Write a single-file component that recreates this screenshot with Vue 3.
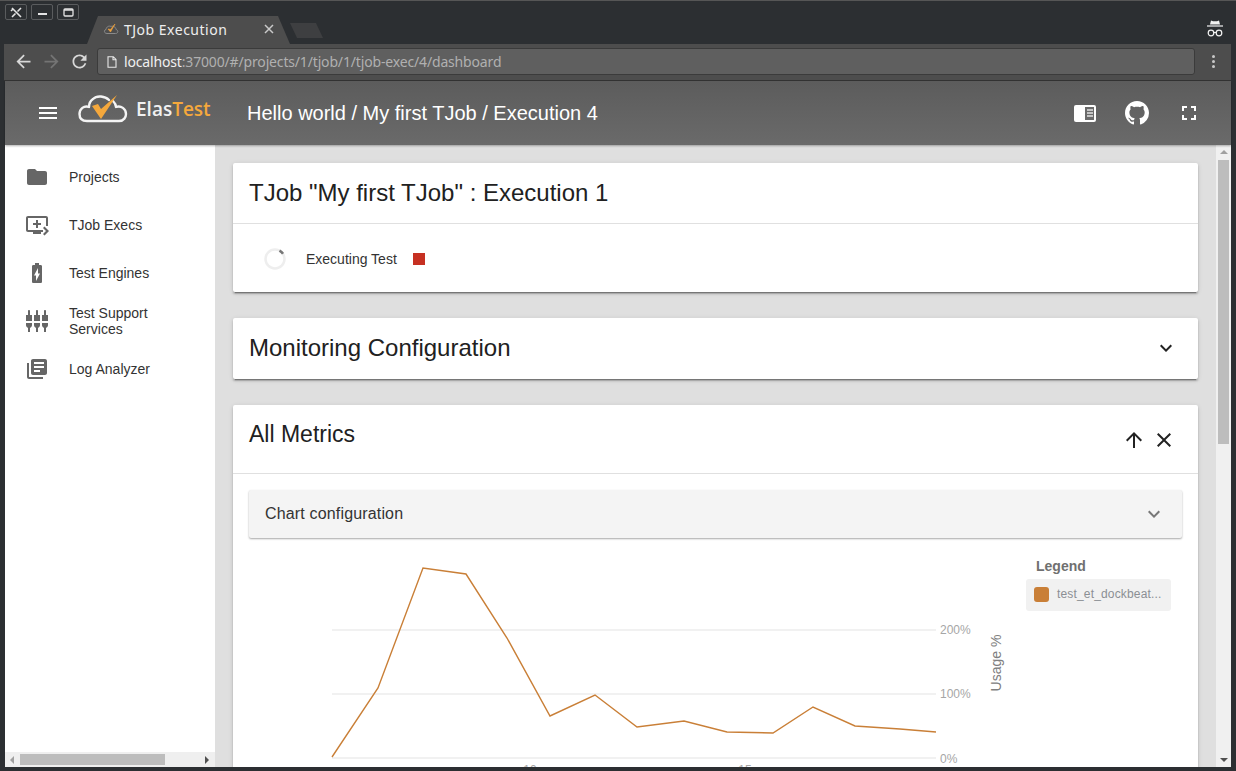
<template>
  <div class="window">
    <!-- browser chrome -->
    <div class="tabstrip">
      <div class="win-btns">
        <span class="win-btn">
          <svg width="13" height="11" viewBox="0 0 13 11"><path d="M2 1l9 9M11 1L7.500 4.500M2 10l3.500-3.500M1 4l2-2" stroke="#e4e4e4" stroke-width="1.600" fill="none" /></svg>
        </span>
        <span class="win-btn">
          <svg width="13" height="11" viewBox="0 0 13 11"><path d="M2 7h9" stroke="#e4e4e4" stroke-width="2" /></svg>
        </span>
        <span class="win-btn">
          <svg width="13" height="11" viewBox="0 0 13 11"><rect x="2" y="2" width="9" height="7" rx="1" stroke="#e4e4e4" stroke-width="1.300" fill="none" /><path d="M2 3h9" stroke="#e4e4e4" stroke-width="1.500" /></svg>
        </span>
      </div>
      <div class="tab">
        <svg class="favicon" width="16" height="12" viewBox="0 0 16 12">
          <path d="M4 10.500C1 10.500 .5 7 3 6.500 3.500 3.500 6 2.500 8 3.500 10 2.500 13 4 13 6.500 15.500 7 15.500 10.500 12.500 10.500Z" fill="none" stroke="#8a8a8a" stroke-width="1" />
          <path d="M5 6l2.500 3L12 1 7.500 6.500Z" fill="#f0a23c" stroke="#f0a23c" stroke-width=".6" />
        </svg>
        <span class="tab-title">TJob Execution</span>
        <svg class="tab-close" width="10" height="10" viewBox="0 0 10 10"><path d="M1 1l8 8M9 1l-8 8" stroke="#c9c9c9" stroke-width="1.500" /></svg>
      </div>
      <div class="new-tab"></div>
      <svg class="incognito" width="18" height="20" viewBox="0 0 18 20">
        <path d="M5 1.500l2 .8h4l2-.8 1 4H4Z" fill="#f2f2f2" />
        <path d="M1 7h16" stroke="#f2f2f2" stroke-width="1.200" />
        <circle cx="5" cy="14" r="2.800" fill="none" stroke="#f2f2f2" stroke-width="1.200" />
        <circle cx="13" cy="14" r="2.800" fill="none" stroke="#f2f2f2" stroke-width="1.200" />
        <path d="M7.500 13.500h3" stroke="#f2f2f2" stroke-width="1.200" />
      </svg>
    </div>

    <div class="browserbar">
      <svg class="nav-icon" width="21" height="21" viewBox="0 0 24 24"><path fill="#d8d8d8" d="M20 11H7.830l5.590-5.590L12 4l-8 8 8 8 1.410-1.410L7.830 13H20v-2z" /></svg>
      <svg class="nav-icon" width="21" height="21" viewBox="0 0 24 24"><path fill="#747474" d="M12 4l-1.410 1.410L16.170 11H4v2h12.170l-5.580 5.590L12 20l8-8z" /></svg>
      <svg class="nav-icon" width="21" height="21" viewBox="0 0 24 24"><path fill="#d8d8d8" d="M17.650 6.350C16.200 4.900 14.210 4 12 4c-4.420 0-7.990 3.580-7.990 8s3.570 8 7.990 8c3.730 0 6.840-2.550 7.730-6h-2.080c-.82 2.330-3.040 4-5.650 4-3.310 0-6-2.690-6-6s2.690-6 6-6c1.660 0 3.140.69 4.220 1.780L13 11h7V4l-2.350 2.350z" /></svg>
      <div class="omnibox">
        <svg width="10" height="12" viewBox="0 0 10 12"><path d="M1 .7h5.300L9 3.400v7.900H1Z M6 .7v3h3" fill="none" stroke="#e8e8e8" stroke-width="1.100" /></svg>
        <span class="url"><span class="host">localhost</span>:37000/#/projects/1/tjob/1/tjob-exec/4/dashboard</span>
      </div>
      <div class="kebab"><i></i><i></i><i></i></div>
    </div>

    <!-- app -->
    <div class="page">
      <header class="appbar">
        <svg class="menu-icon" width="24" height="24" viewBox="0 0 24 24"><path fill="#fff" d="M3 18h18v-2H3v2zm0-5h18v-2H3v2zm0-7v2h18V6H3z" /></svg>
        <div class="logo">
          <svg class="logo-mark" width="50" height="30" viewBox="0 0 50 30">
            <path d="M31 6C27 2 19 1 15 5 12 7 11 10 11 13 6 11 1.500 15 1.500 20 1.500 25 5 27 9 27L41 27C46 27 48 23 48 20 48 15 43 11 38 13 38 10 36 8 35 7" fill="none" stroke="#f4f4f4" stroke-width="2.400" stroke-linejoin="round" stroke-linecap="round" />
            <path d="M14 12l6-2 3 5L39 1 23 25Z" fill="#f5a83c" />
          </svg>
          <span class="logo-text">Elas<span class="logo-accent">Test</span></span>
        </div>
        <span class="crumbs">Hello world / My first TJob / Execution 4</span>
        <div class="appbar-actions">
          <svg width="24" height="24" viewBox="0 0 24 24">
            <rect x="1" y="4" width="22" height="17" rx="2" fill="#fff" />
            <rect x="12" y="6" width="9" height="13" fill="#6a6a6a" />
            <path d="M14 9h6M14 12h6M14 15h6" stroke="#e4e4e4" stroke-width="1.500" />
          </svg>
          <svg width="24" height="24" viewBox="0 0 16 16"><path fill="#fff" d="M8 0C3.580 0 0 3.580 0 8c0 3.540 2.290 6.530 5.470 7.590.4.070.55-.17.55-.38 0-.19-.01-.82-.01-1.490-2.010.37-2.530-.49-2.690-.94-.09-.23-.48-.94-.82-1.130-.28-.15-.68-.52-.01-.53.63-.01 1.080.58 1.230.82.72 1.210 1.870.87 2.330.66.070-.52.28-.87.51-1.070-1.780-.2-3.640-.89-3.640-3.950 0-.87.31-1.590.82-2.150-.08-.2-.36-1.020.08-2.120 0 0 .67-.21 2.200.82.64-.18 1.320-.27 2-.27.68 0 1.360.09 2 .27 1.530-1.040 2.200-.82 2.200-.82.44 1.100.16 1.920.08 2.120.51.56.82 1.270.82 2.150 0 3.070-1.870 3.750-3.650 3.950.29.25.54.73.54 1.480 0 1.070-.01 1.930-.01 2.200 0 .21.15.46.55.38A8.013 8.013 0 0016 8c0-4.420-3.580-8-8-8z" /></svg>
          <svg width="24" height="24" viewBox="0 0 24 24"><path fill="#fff" d="M7 14H5v5h5v-2H7v-3zm-2-4h2V7h3V5H5v5zm12 7h-3v2h5v-5h-2v3zM14 5v2h3v3h2V5h-5z" /></svg>
        </div>
      </header>

      <div class="body-row">
        <aside class="sidebar">
          <nav class="nav">
            <a v-for="item in navItems" :key="item.label" class="nav-item">
              <svg width="24" height="24" viewBox="0 0 24 24"><path fill="#666" :d="item.icon" /></svg>
              <span class="nav-label">{{ item.label }}</span>
            </a>
          </nav>
          <div class="hscroll">
            <span class="arrow-left"></span>
            <span class="hthumb"></span>
            <span class="arrow-right"></span>
          </div>
        </aside>

        <main class="content">
          <section class="card">
            <div class="card-head">
              <h2 class="card-title">TJob "My first TJob" : Execution 1</h2>
            </div>
            <div class="exec-row">
              <svg width="24" height="24" viewBox="0 0 24 24">
                <circle cx="12" cy="12" r="9.500" fill="none" stroke="#eeeeee" stroke-width="2.500" />
                <path d="M16.500 3.600A9.500 9.500 0 0 1 20 6.800" fill="none" stroke="#777" stroke-width="2.500" />
              </svg>
              <span class="exec-label">Executing Test</span>
              <span class="stop-square"></span>
            </div>
          </section>

          <section class="card">
            <div class="card-head between">
              <h2 class="card-title">Monitoring Configuration</h2>
              <svg width="24" height="24" viewBox="0 0 24 24"><path fill="#222" d="M16.590 8.590L12 13.170 7.410 8.590 6 10l6 6 6-6z" /></svg>
            </div>
          </section>

          <section class="card">
            <div class="metrics-head">
              <h2 class="card-title small">All Metrics</h2>
              <div class="metrics-actions">
                <svg width="24" height="24" viewBox="0 0 24 24"><path fill="#222" d="M4 12l1.410 1.410L11 7.830V20h2V7.830l5.580 5.590L20 12l-8-8-8 8z" /></svg>
                <svg width="24" height="24" viewBox="0 0 24 24"><path fill="#222" d="M19 6.410L17.590 5 12 10.590 6.410 5 5 6.410 10.590 12 5 17.590 6.410 19 12 13.410 17.590 19 19 17.590 13.410 12z" /></svg>
              </div>
            </div>
            <div class="metrics-body">
              <div class="chart-config">
                <span>Chart configuration</span>
                <svg width="24" height="24" viewBox="0 0 24 24"><path fill="#777" d="M16.590 8.590L12 13.170 7.410 8.590 6 10l6 6 6-6z" /></svg>
              </div>
              <div class="chart-row">
                <svg class="chart" width="777" height="240" viewBox="249 538 777 240">
                  <line v-for="y in gridLines" :key="y" x1="332" x2="936" :y1="y" :y2="y" stroke="#e3e3e3" stroke-width="1.200" />
                  <polyline :points="linePoints" fill="none" stroke="#c97f37" stroke-width="1.400" />
                  <text v-for="t in yTicks" :key="t.label" x="940" :y="t.y" class="tick">{{ t.label }}</text>
                  <text x="530" y="774" class="tick" text-anchor="middle">10</text>
                  <text x="745" y="774" class="tick" text-anchor="middle">15</text>
                  <text class="axis" transform="translate(1001 663) rotate(-90)" text-anchor="middle">Usage %</text>
                </svg>
                <div class="legend">
                  <div class="legend-title">Legend</div>
                  <div class="legend-item">
                    <span class="swatch"></span>
                    <span class="legend-label">test_et_dockbeat...</span>
                  </div>
                </div>
              </div>
            </div>
          </section>
        </main>

        <div class="vscroll">
          <span class="arrow-up"></span>
          <div class="vtrack"><span class="vthumb"></span></div>
          <span class="arrow-down"></span>
        </div>
      </div>
    </div>
  </div>
</template>

<script setup>
const navItems = [
  { label: 'Projects', icon: 'M10 4H4c-1.100 0-1.990.9-1.990 2L2 18c0 1.100.9 2 2 2h16c1.100 0 2-.9 2-2V8c0-1.100-.9-2-2-2h-8l-2-2z' },
  { label: 'TJob Execs', icon: 'M21 3H3c-1.110 0-2 .89-2 2v12c0 1.100.89 2 2 2h5v2h8v-2h2v-2H3V5h18v8h2V5c0-1.110-.9-2-2-2zm-8 7V7h-2v3H8v2h3v3h2v-3h3v-2h-3zm11 8l-4.500 4.500L18 21l3-3-3-3 1.500-1.500L24 18z' },
  { label: 'Test Engines', icon: 'M15.670 4H14V2h-4v2H8.330C7.600 4 7 4.600 7 5.330v15.330C7 21.400 7.600 22 8.330 22h7.330c.74 0 1.340-.6 1.340-1.330V5.330C17 4.600 16.400 4 15.670 4zM11 20v-5.500H9L13 7v5.500h2L11 20z' },
  { label: 'Test Support Services', icon: 'M5 2c0-.55-.45-1-1-1s-1 .45-1 1v4H1v6h6V6H5V2zm4 14c0 1.300.84 2.400 2 2.820V23h2v-4.180c1.160-.41 2-1.510 2-2.820v-2H9v2zm-8 0c0 1.300.84 2.400 2 2.820V23h2v-4.180C6.160 18.400 7 17.300 7 16v-2H1v2zM21 6V2c0-.55-.45-1-1-1s-1 .45-1 1v4h-2v6h6V6h-2zm-8-4c0-.55-.45-1-1-1s-1 .45-1 1v4H9v6h6V6h-2V2zm4 14c0 1.300.84 2.400 2 2.820V23h2v-4.180c1.160-.41 2-1.510 2-2.820v-2h-6v2z' },
  { label: 'Log Analyzer', icon: 'M4 6H2v14c0 1.100.9 2 2 2h14v-2H4V6zm16-4H8c-1.100 0-2 .9-2 2v12c0 1.100.9 2 2 2h12c1.100 0 2-.9 2-2V4c0-1.100-.9-2-2-2zm-1 9H9V9h10v2zm-4 4H9v-2h6v2zm4-8H9V5h10v2z' },
]

const gridLines = [630, 694, 758]

const yTicks = [
  { label: '200%', y: 634 },
  { label: '100%', y: 698 },
  { label: '0%', y: 763 },
]

const linePoints = [
  [332, 757], [378, 688], [423, 568], [466, 574], [507, 638], [550, 716], [595, 695],
  [637, 727], [684, 721], [727, 732], [773, 733], [813, 707], [855, 726], [900, 729], [936, 732],
].map(([x, y]) => `${x},${y}`).join(' ')
</script>

<style>
html, body {
  margin: 0;
  overflow: hidden;
  background: #2c2f32;
}
</style>

<style scoped>
.window {
  width: 1236px;
  height: 771px;
  box-sizing: border-box;
  display: flex;
  flex-direction: column;
  background: #2c2f32;
  border-top: 1px solid #565656;
  padding: 0 5px 4px 4px;
  overflow: hidden;
  font-family: "Liberation Sans", Arial, sans-serif;
}

.tabstrip {
  height: 43px;
  flex: none;
  display: flex;
  align-items: flex-start;
}

.win-btns {
  display: flex;
  gap: 4px;
  margin: 3px 0 0 1px;
}

.win-btn {
  width: 20px;
  height: 14px;
  border: 1px solid #5a5c5e;
  border-radius: 2px;
  display: flex;
  align-items: center;
  justify-content: center;
}

.tab {
  width: 203px;
  height: 28px;
  margin: 15px 0 0 8px;
  box-sizing: border-box;
  padding: 0 16px 2px;
  display: flex;
  align-items: center;
  background: #4d4d4d;
  clip-path: polygon(0 100%, 11px 0, 191px 0, 100% 100%);
  flex: none;
}

.favicon {
  margin-right: 5px;
  flex: none;
}

.tab-title {
  color: #eeeeee;
  font-family: "Noto Sans", sans-serif;
  font-size: 14px;
  letter-spacing: .5px;
  flex: 1;
}

.tab-close {
  flex: none;
}

.new-tab {
  width: 33px;
  height: 15px;
  margin: 22px 0 0 0;
  background: #3e3f41;
  clip-path: polygon(0 0, 26px 0, 100% 100%, 7px 100%);
  flex: none;
}

.incognito {
  margin: 18px 7px 0 auto;
}

.browserbar {
  height: 37px;
  flex: none;
  box-sizing: border-box;
  display: flex;
  align-items: center;
  background: #4d4d4d;
  border-bottom: 1px solid #333;
  padding: 4px 0 5px 9px;
}

.nav-icon {
  margin-right: 7px;
  flex: none;
}

.omnibox {
  flex: 1;
  height: 27px;
  box-sizing: border-box;
  display: flex;
  align-items: center;
  gap: 7px;
  padding-left: 9px;
  background: #5f5f5f;
  border: 1px solid #3b3b3b;
  border-radius: 3px;
}

.url {
  color: #b0b0b0;
  font-family: "Noto Sans", sans-serif;
  font-size: 14px;
  letter-spacing: -.16px;
}

.host {
  color: #f0f0f0;
}

.kebab {
  width: 36px;
  flex: none;
  display: flex;
  flex-direction: column;
  align-items: center;
  gap: 2px;
}

.kebab i {
  width: 3px;
  height: 3px;
  border-radius: 50%;
  background: #c8c8c8;
}

.page {
  flex: 1;
  min-height: 0;
  display: flex;
  flex-direction: column;
}

.appbar {
  height: 64px;
  flex: none;
  display: flex;
  align-items: center;
  background: linear-gradient(#5c5c5c, #6a6a6a);
  box-shadow: 0 1px 2px rgba(0, 0, 0, .3);
  position: relative;
  z-index: 2;
  padding-left: 31px;
  margin-left: 1px;
}

.menu-icon {
  flex: none;
}

.logo {
  display: flex;
  align-items: center;
  margin-left: 18px;
  width: 169px;
  flex: none;
}

.logo-mark {
  margin-bottom: 8px;
  flex: none;
}

.logo-text {
  margin-left: 8px;
  color: #f0f0f0;
  font-family: "Open Sans", sans-serif;
  font-size: 19px;
  font-weight: 600;
  position: relative;
  top: -4px;
}

.logo-accent {
  color: #f5a83c;
}

.crumbs {
  color: #fff;
  font-size: 20px;
}

.appbar-actions {
  margin-left: auto;
  margin-right: 30px;
  display: flex;
  gap: 28px;
}

.body-row {
  flex: 1;
  min-height: 0;
  display: flex;
  margin-left: 1px;
}

.sidebar {
  width: 210px;
  flex: none;
  display: flex;
  flex-direction: column;
  background: #fff;
}

.nav {
  flex: 1;
  padding-top: 8px;
}

.nav-item {
  height: 48px;
  display: flex;
  align-items: center;
  padding-left: 20px;
  gap: 20px;
  color: #333;
  font-size: 14px;
  line-height: 16px;
}

.nav-item svg {
  flex: none;
}

.nav-label {
  width: 110px;
}

.hscroll {
  height: 15px;
  flex: none;
  display: flex;
  align-items: center;
  background: #efefef;
}

.hthumb {
  width: 145px;
  height: 11px;
  background: #bdbdbd;
  margin-left: 6px;
}

.arrow-left {
  margin-left: 5px;
  border: 4px solid transparent;
  border-left: 0;
  border-right: 4px solid #a0a0a0;
}

.arrow-right {
  margin-left: auto;
  margin-right: 6px;
  border: 4px solid transparent;
  border-right: 0;
  border-left: 4px solid #505050;
}

.content {
  flex: 1;
  min-width: 0;
  overflow: hidden;
  background: #dfdfdf;
  padding: 18px 18px 0;
  display: flex;
  flex-direction: column;
  gap: 26px;
}

.card {
  background: #fff;
  border-radius: 2px;
  flex: none;
  box-shadow: 0 3px 1px -2px rgba(0, 0, 0, .3), 0 2px 2px 0 rgba(0, 0, 0, .2), 0 1px 5px 0 rgba(0, 0, 0, .12);
}

.card-head {
  height: 61px;
  box-sizing: border-box;
  display: flex;
  align-items: center;
  padding: 0 20px 0 16px;
  border-bottom: 1px solid #e0e0e0;
}

.card-head.between {
  justify-content: space-between;
  border-bottom: 0;
  padding-bottom: 2px;
}

.card-title {
  margin: 0;
  color: #212121;
  font-size: 24px;
  font-weight: 400;
}

.card-title.small {
  font-size: 23px;
}

.exec-row {
  height: 68px;
  box-sizing: border-box;
  display: flex;
  align-items: center;
  padding: 2px 0 0 30px;
}

.exec-label {
  margin-left: 19px;
  color: #333;
  font-size: 14px;
}

.stop-square {
  width: 12px;
  height: 12px;
  margin-left: 16px;
  background: #c63022;
}

.metrics-head {
  height: 69px;
  box-sizing: border-box;
  display: flex;
  justify-content: space-between;
  padding: 16px 22px 0 16px;
  border-bottom: 1px solid #e0e0e0;
}

.metrics-actions {
  display: flex;
  gap: 6px;
  padding-top: 7px;
}

.metrics-body {
  padding: 16px 16px 0;
}

.chart-config {
  height: 48px;
  box-sizing: border-box;
  display: flex;
  align-items: center;
  justify-content: space-between;
  padding: 0 16px;
  background: #f4f4f4;
  color: #333;
  font-size: 16px;
  letter-spacing: .16px;
  box-shadow: 0 1px 2px rgba(0, 0, 0, .35);
  border-radius: 2px;
}

.chart-row {
  display: flex;
}

.chart {
  flex: none;
  display: block;
}

.tick {
  fill: #a6a6a6;
  font-size: 12px;
}

.axis {
  fill: #808080;
  font-size: 14px;
}

.legend {
  width: 145px;
  padding-top: 20px;
}

.legend-title {
  color: #707070;
  font-size: 14px;
  font-weight: 700;
  line-height: 16px;
  margin: 0 0 5px 10px;
}

.legend-item {
  height: 32px;
  box-sizing: border-box;
  display: flex;
  align-items: center;
  gap: 8px;
  padding-left: 8px;
  background: #f1f1f1;
  border-radius: 3px;
}

.swatch {
  width: 15px;
  height: 15px;
  background: #c97f37;
  border-radius: 3px;
  flex: none;
  margin-top: -1px;
}

.legend-label {
  color: #8b8f94;
  font-size: 12px;
  letter-spacing: .16px;
  white-space: nowrap;
  padding-bottom: 2px;
}

.vscroll {
  width: 15px;
  flex: none;
  display: flex;
  flex-direction: column;
  align-items: center;
  background: #f0f0f0;
}

.vtrack {
  flex: 1;
  min-height: 0;
}

.vthumb {
  display: block;
  width: 11px;
  height: 284px;
  background: #bdbdbd;
}

.arrow-up {
  margin: 5px 0 6px;
  border: 4px solid transparent;
  border-top: 0;
  border-bottom: 4px solid #a0a0a0;
}

.arrow-down {
  margin: 5px 0 5px;
  border: 4px solid transparent;
  border-bottom: 0;
  border-top: 4px solid #505050;
}
</style>
